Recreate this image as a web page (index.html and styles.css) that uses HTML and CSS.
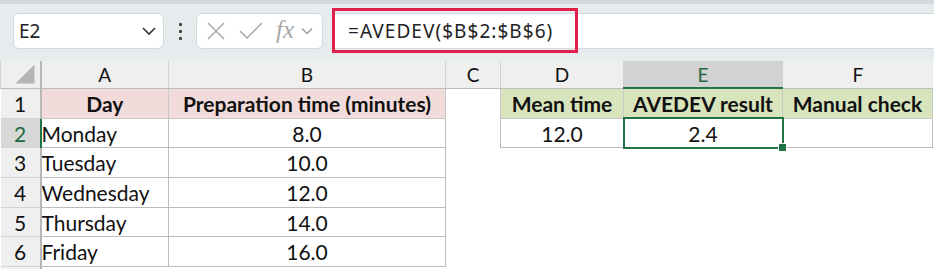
FILE: index.html
```html
<!DOCTYPE html>
<html lang="en">
<head>
  <meta charset="UTF-8">
  <title>AVEDEV example</title>
  <link rel="stylesheet" href="styles.css">
</head>
<body>
  <div class="toolbar">
    <div class="name-box">
      <span>E2</span>
      <svg class="chev" width="16" height="10" viewBox="0 0 16 10"><path d="M2 2 L8 8 L14 2" fill="none" stroke="#333" stroke-width="1.6"/></svg>
    </div>
    <div class="dots"><i></i><i></i><i></i></div>
    <div class="fx-buttons">
      <svg width="20" height="20" viewBox="0 0 20 20"><path d="M2 2 L18 18 M18 2 L2 18" stroke="#a8a8a8" stroke-width="1.5"/></svg>
      <svg width="26" height="20" viewBox="0 0 26 20"><path d="M2 10 L9 17 L24 2" fill="none" stroke="#a8a8a8" stroke-width="1.5"/></svg>
      <span class="fx">fx</span>
      <svg width="12" height="8" viewBox="0 0 12 8"><path d="M1 1.5 L6 6.5 L11 1.5" fill="none" stroke="#999" stroke-width="1.4"/></svg>
    </div>
    <div class="formula">
      <span class="formula-text">=AVEDEV($B$2:$B$6)</span>
      <div class="highlight"></div>
    </div>
  </div>

  <table class="sheet">
    <colgroup>
      <col style="width:40px"><col style="width:128px"><col style="width:277px"><col style="width:55px">
      <col style="width:123px"><col style="width:159px"><col style="width:150px">
    </colgroup>
    <tr class="col-heads">
      <th class="corner"><div class="tri"></div></th>
      <th>A</th><th>B</th><th>C</th><th>D</th><th class="active">E</th><th>F</th>
    </tr>
    <tr>
      <th class="rh">1</th>
      <td class="hd pink">Day</td><td class="hd pink">Preparation time (minutes)</td><td class="blank"></td>
      <td class="hd green">Mean time</td><td class="hd green">AVEDEV result</td><td class="hd green">Manual check</td>
    </tr>
    <tr>
      <th class="rh active-row">2</th>
      <td class="bx">Monday</td><td class="bx num">8.0</td><td class="blank"></td>
      <td class="bx num">12.0</td><td class="bx num selected">2.4<span class="handle"></span></td><td class="bx"></td>
    </tr>
    <tr>
      <th class="rh">3</th>
      <td class="bx">Tuesday</td><td class="bx num">10.0</td><td class="blank"></td><td></td><td></td><td></td>
    </tr>
    <tr>
      <th class="rh">4</th>
      <td class="bx">Wednesday</td><td class="bx num">12.0</td><td class="blank"></td><td></td><td></td><td></td>
    </tr>
    <tr>
      <th class="rh">5</th>
      <td class="bx">Thursday</td><td class="bx num">14.0</td><td class="blank"></td><td></td><td></td><td></td>
    </tr>
    <tr>
      <th class="rh">6</th>
      <td class="bx">Friday</td><td class="bx num">16.0</td><td class="blank"></td><td></td><td></td><td></td>
    </tr>
    <tr class="last">
      <th class="rh"></th><td></td><td></td><td></td><td></td><td></td><td></td>
    </tr>
  </table>
</body>
</html>
```

FILE: styles.css
```css
body {
  margin: 0;
  width: 934px;
  height: 269px;
  overflow: hidden;
  background: #fff;
  font-family: Lato, "Liberation Sans", sans-serif;
}
.toolbar {
  height: 61px;
  box-sizing: border-box;
  background: #e6ebee;
  border-top: 4px solid #d3d8dc;
  display: flex;
  align-items: flex-start;
  padding: 9px 0 0 13px;
}
.name-box {
  width: 151px;
  height: 36px;
  box-sizing: border-box;
  background: #fff;
  border: 1px solid #d4d8db;
  border-radius: 6px;
  display: flex;
  align-items: center;
  justify-content: space-between;
  padding: 0 6px 0 5px;
  font-family: "Noto Sans", sans-serif;
  font-size: 19px;
  color: #222;
}
.dots {
  width: 32px;
  height: 36px;
  display: flex;
  flex-direction: column;
  align-items: center;
  justify-content: center;
  gap: 4px;
}
.dots i {
  width: 3px;
  height: 3px;
  background: #4a3f36;
  border-radius: 1px;
}
.fx-buttons {
  width: 127px;
  height: 36px;
  box-sizing: border-box;
  background: #fff;
  border: 1px solid #d4d8db;
  border-radius: 6px;
  display: flex;
  align-items: center;
  gap: 12px;
  padding-left: 9px;
}
.fx {
  font-family: "Liberation Serif", serif;
  font-style: italic;
  font-size: 25px;
  color: #a8a8a8;
  margin-left: 0;
  margin-right: -5px;
  margin-top: -3px;
}
.formula {
  position: relative;
  flex: 1;
  margin-left: 10px;
  height: 36px;
  box-sizing: border-box;
  background: #fff;
  border-top: 1px solid #d4d8db;
  border-bottom: 1px solid #d4d8db;
  display: flex;
  align-items: center;
  padding-left: 15px;
}
.formula-text {
  font-family: "Noto Sans", sans-serif;
  font-size: 19px;
  letter-spacing: 1.05px;
  color: #222;
}
.highlight {
  position: absolute;
  left: -1px;
  top: -6px;
  width: 246px;
  height: 45px;
  box-sizing: border-box;
  border: 3px solid #e0204a;
}
.sheet {
  border-collapse: collapse;
  table-layout: fixed;
  width: 932px;
}
.sheet th, .sheet td {
  padding: 0;
  height: 28.7px;
  font-size: 21px;
  color: #111;
  white-space: nowrap;
  overflow: hidden;
}
.col-heads th {
  height: 26px;
  background: #efefef;
  font-weight: normal;
  font-size: 19px;
  border-left: 1px solid #d2d2d2;
  border-bottom: 1px solid #bdbdbd;
}
.col-heads th.active {
  background: #d2d2d2;
  color: #1e6b41;
  border-bottom: 2px solid #217346;
}
.corner {
  position: relative;
  border-right: 2px solid #b8b8b8;
}
.tri {
  position: absolute;
  right: 5px;
  bottom: 4px;
  width: 19px;
  height: 19px;
  background: #b4b4b4;
  clip-path: polygon(100% 0, 100% 100%, 0 100%);
}
.rh {
  background: #efefef;
  font-weight: normal;
  text-align: center;
  border-right: 2px solid #b8b8b8;
  border-bottom: 1px solid #d2d2d2;
}
.rh.active-row {
  background: #d8d8d8;
  color: #1e6b41;
  border-right: 2px solid #217346;
}
.hd {
  font-weight: bold;
  font-size: 21.5px;
  text-align: center;
  border: 1px solid #c8c8c8;
}
.pink {
  background: #f2dcdb;
}
.green {
  background: #d8e4bc;
}
.bx {
  border: 1px solid #bcbcbc;
  padding-left: 4px;
}
.num {
  text-align: center;
}
.sheet td.selected {
  position: relative;
  outline: 2px solid #217346;
  outline-offset: -1px;
  overflow: visible;
}
.handle {
  position: absolute;
  z-index: 2;
  right: -5px;
  bottom: -5px;
  width: 7px;
  height: 7px;
  background: #217346;
  border: 1px solid #fff;
}
.last td, .last th {
  height: 3px;
}
```
